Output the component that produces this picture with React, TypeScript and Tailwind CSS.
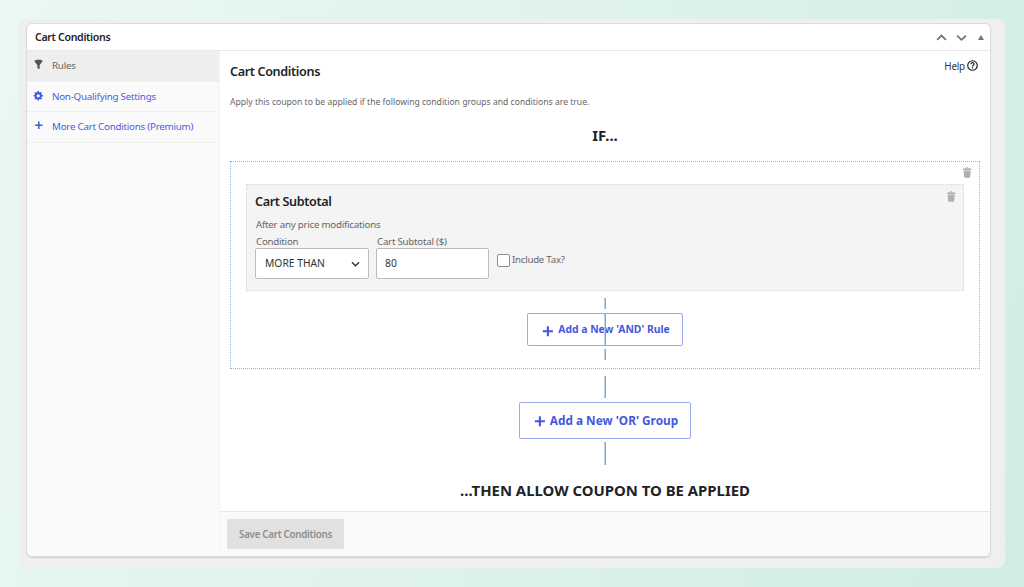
import type { ReactNode } from "react"
import clsx from "clsx"

const paths = {
  filter: "M3 4.5v-2s3.34-1 7-1 7 1 7 1v2l-5 7.03v6.97s-1.22-.09-2.25-.59S8 16.5 8 16.5v-4.97z",
  gear: "M18 12h-2.18c-.17.7-.44 1.35-.81 1.93l1.54 1.54-2.1 2.1-1.54-1.54c-.58.36-1.23.63-1.91.79V19H8v-2.18c-.68-.16-1.33-.43-1.91-.79l-1.54 1.54-2.12-2.12 1.54-1.54c-.36-.58-.63-1.23-.79-1.91H1V9.03h2.17c.16-.7.44-1.35.8-1.94L2.43 5.55l2.1-2.1 1.54 1.54c.58-.37 1.24-.64 1.93-.81V2h3v2.18c.68.16 1.33.43 1.91.79l1.54-1.54 2.12 2.12-1.54 1.54c.36.59.64 1.24.8 1.94H18V12zm-8.5 1.5c1.66 0 3-1.34 3-3s-1.34-3-3-3-3 1.34-3 3 1.34 3 3 3z",
  plus: "M17.2 8.2v2.8h-5.3v5.3H9.1V11H3.8V8.2h5.3V2.9h2.8v5.3z",
  trash: "M12 4h3c.6 0 1 .4 1 1v1H3V5c0-.6.5-1 1-1h3c.2-1.1 1.3-2 2.5-2s2.3.9 2.5 2zM8 4h3c-.2-.6-.9-1-1.5-1S8.2 3.4 8 4zM4 7h11l-.9 10.1c0 .5-.5.9-1 .9H5.9c-.5 0-.9-.4-1-.9L4 7z",
}

function Icon({ name, className }: { name: keyof typeof paths; className?: string }) {
  return (
    <svg viewBox="0 0 20 20" fill="currentColor" className={clsx("shrink-0", className)}>
      <path d={paths[name]} />
    </svg>
  )
}

function Chevron({ up, className }: { up?: boolean; className?: string }) {
  return (
    <svg viewBox="0 0 12 8" fill="none" stroke="currentColor" strokeWidth="1.9" className={className}>
      <path d={up ? "M1.2 6.3 6 1.7l4.8 4.6" : "M1.2 1.7 6 6.3l4.8-4.6"} />
    </svg>
  )
}

function Connector({ className }: { className: string }) {
  return <div className={clsx("w-[2px] border-l border-[#b9d2e4] bg-[#84a9c7]", className)} />
}

const tabs: { icon: keyof typeof paths; label: string; active?: boolean }[] = [
  { icon: "filter", label: "Rules", active: true },
  { icon: "gear", label: "Non-Qualifying Settings" },
  { icon: "plus", label: "More Cart Conditions (Premium)" },
]

function Sidebar() {
  return (
    <nav className="w-[193px] shrink-0 border-r border-[#f4f4f4] bg-[#fafafa]">
      {tabs.map((tab) => (
        <div
          key={tab.label}
          className={clsx(
            "flex h-[30.5px] items-center border-b border-[#f0f0f0] pl-[6px] pt-[2px] text-[9.8px] tracking-[-0.25px]",
            tab.active ? "bg-[#eeeeee] text-[#666]" : "text-[#4a5ce0]",
          )}
        >
          <Icon name={tab.icon} className={clsx("mb-[4px] size-[11px]", tab.active ? "text-[#555]" : "text-[#3f55df]")} />
          <span className="ml-2">{tab.label}</span>
        </div>
      ))}
    </nav>
  )
}

function Label({ children }: { children: ReactNode }) {
  return <div className="flex h-[12px] items-center pl-px text-[9.7px] tracking-[-0.22px] text-[#666]">{children}</div>
}

function Rule() {
  return (
    <div className="mx-[15px] flex h-[107px] justify-between border border-dotted border-[#d8d8d8] bg-[#f4f4f4] pl-2 pr-[5px]">
      <div>
        <h3 className="mt-2 flex h-[18px] items-center text-[12.6px] font-semibold tracking-[-0.35px] text-[#1d2327]">
          Cart Subtotal
        </h3>
        <div className="mt-[7px] flex h-[14px] items-center pl-px text-[9.7px] tracking-[-0.22px] text-[#666]">
          After any price modifications
        </div>
        <div className="mt-[4px] flex">
          <div>
            <Label>Condition</Label>
            <div className="flex h-[31px] w-[114px] items-center justify-between rounded-[2px] border border-[#bcbcbc] bg-white pl-[9px] pr-2 text-[10.3px] text-[#333]">
              <span className="mt-px">MORE THAN</span>
              <Chevron className="w-[9px]" />
            </div>
          </div>
          <div className="ml-[7px]">
            <Label>Cart Subtotal ($)</Label>
            <div className="flex h-[31px] w-[113px] items-center rounded-[2px] border border-[#bcbcbc] bg-white pl-[8px] pt-px text-[10.3px] text-[#333]">
              80
            </div>
          </div>
          <div className="ml-2 mt-[18px] flex h-[13px] items-center text-[9.7px] tracking-[-0.25px] text-[#666]">
            <div className="mr-[2px] size-[13px] rounded-[2px] border border-[#8c8f94] bg-white" />
            <span>Include Tax?</span>
          </div>
        </div>
      </div>
      <Icon name="trash" className="mt-[5px] size-[13px] text-[#b0b0b0]" />
    </div>
  )
}

function Builder() {
  return (
    <div className="flex h-[460px] flex-col px-[10px]">
      <div className="flex justify-between">
        <h2 className="mt-3 flex h-[18px] items-center text-[12.6px] font-semibold tracking-[-0.35px] text-[#1d2327]">
          Cart Conditions
        </h2>
        <div className="mr-[2px] mt-2 flex h-[14px] items-center text-[9.9px] tracking-[-0.2px] text-[#333]">
          <span>Help</span>
          <svg viewBox="0 0 12 12" fill="none" stroke="#1d2327" className="mb-px ml-[2px] size-[11px]">
            <circle cx="6" cy="6" r="5.2" strokeWidth="1.3" />
            <path d="M4.2 4.7c0-2.4 3.6-2.3 3.6-.1C7.8 5.8 6 5.8 6 7.2" strokeWidth="1.3" />
            <path d="M6 8v1.3" strokeWidth="1.4" />
          </svg>
        </div>
      </div>
      <p className="mt-[13px] flex h-[16px] items-center text-[8.6px] text-[#666]">
        Apply this coupon to be applied if the following condition groups and conditions are true.
      </p>
      <div className="mt-[15px] flex h-[20px] items-center justify-center text-[14.9px] font-bold text-[#1d2327]">IF...</div>

      <div className="mt-[16px] flex h-[208px] shrink-0 flex-col border border-dotted border-[#8fbbd9]">
        <div className="flex h-[22px] justify-end pr-[5px] pt-[4px]">
          <Icon name="trash" className="size-[13px] text-[#b0b0b0]" />
        </div>
        <Rule />
        <div className="flex flex-col items-center pt-[7px]">
          <Connector className="h-[11px]" />
          <div className="relative mt-1 flex h-[33px] w-[156px] items-center justify-center rounded-[2px] border border-[#9da9ef] text-[10.4px] font-bold text-[#4358e0]">
            <Icon name="plus" className="mr-[3px] mt-[3px] size-[15px]" />
            <span>Add a New 'AND' Rule</span>
            <div className="absolute inset-y-0 left-[76px] w-[2px] border-l border-[#b9d2e4] bg-[#84a9c7]" />
          </div>
          <Connector className="mt-[3px] h-[11px]" />
        </div>
      </div>

      <div className="flex flex-col items-center pt-[7px]">
        <Connector className="h-[22px]" />
        <div className="mt-1 flex h-[37px] w-[172px] items-center justify-center rounded-[2px] border border-[#9da9ef] text-[11.8px] font-bold text-[#4358e0]">
          <Icon name="plus" className="mr-[3px] mt-[2px] size-[15px]" />
          <span className="mt-px">Add a New 'OR' Group</span>
        </div>
        <Connector className="mt-[3px] h-[23px]" />
      </div>
      <div className="mt-[15px] flex h-[20px] items-center justify-center text-[14.9px] font-bold text-[#1d2327]">
        ...THEN ALLOW COUPON TO BE APPLIED
      </div>
    </div>
  )
}

export default function App() {
  return (
    <div className="h-[587px] w-[1024px] overflow-hidden whitespace-nowrap bg-linear-110 from-[#ebf8f4] to-[#d1ede2] pl-[19px] pt-[19px] font-['Noto_Sans',sans-serif]">
      <div className="h-[549px] w-[986px] rounded-[8px] bg-[#efefef] pl-[7px] pt-[4px]">
        <div className="flex h-[534px] w-[965px] flex-col overflow-hidden rounded-[6px] border border-[#dcdcdc] bg-white shadow-[0_1px_1px_#d2d2d2]">
          <header className="flex h-[27px] shrink-0 items-center justify-between border-b border-[#e8e8e8] pl-2 pr-[6px] pt-[2px]">
            <h1 className="text-[10.6px] font-semibold tracking-[-0.32px] text-[#1d2327]">Cart Conditions</h1>
            <div className="flex items-center text-[#70757a]">
              <Chevron up className="w-[11px]" />
              <Chevron className="ml-[9px] w-[11px]" />
              <svg viewBox="0 0 6 5" fill="currentColor" className="mb-px ml-[11px] w-[6px]">
                <path d="M3 0 6 5H0z" />
              </svg>
            </div>
          </header>
          <div className="flex flex-1">
            <Sidebar />
            <main className="flex flex-1 flex-col">
              <Builder />
              <footer className="flex-1 border-t border-[#e8e8e8] bg-[#fafafa] pl-[7px] pt-[7px]">
                <button className="flex h-[30px] w-[117px] items-center justify-center rounded-[1px] bg-[#e1e1e1] pt-[2px] text-[9.8px] font-semibold tracking-[-0.3px] text-[#8e8e8e]">
                  Save Cart Conditions
                </button>
              </footer>
            </main>
          </div>
        </div>
      </div>
    </div>
  )
}
